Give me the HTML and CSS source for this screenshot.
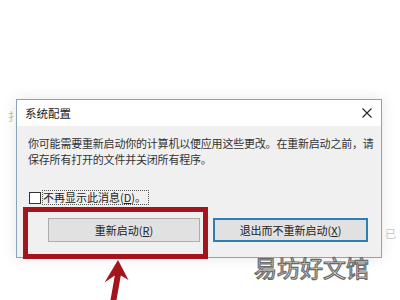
FILE: index.html
```html
<!DOCTYPE html>
<html lang="zh-CN">
<head>
<meta charset="utf-8">
<link rel="stylesheet" href="styles.css">
</head>
<body>
<div class="page">
  <span class="bg-glyph bg-left">扌</span>
  <span class="bg-glyph bg-right">已</span>
  <div class="dialog">
    <div class="titlebar">
      <span class="title">系统配置</span>
      <svg class="close" width="10" height="10" viewBox="0 0 10 10"><path d="M0.5 0.5L9.5 9.5M9.5 0.5L0.5 9.5" stroke="#222" stroke-width="1.1" fill="none"/></svg>
    </div>
    <div class="content">
      <p class="msg">你可能需要重新启动你的计算机以便应用这些更改。在重新启动之前，请<br>保存所有打开的文件并关闭所有程序。</p>
      <label class="check-row">
        <span class="box"></span>
        <span class="check-label">不再显示此消息(<u>D</u>)。</span>
      </label>
      <div class="buttons">
        <button class="btn">重新启动(<u>R</u>)</button>
        <button class="btn btn-default">退出而不重新启动(<u>X</u>)</button>
      </div>
    </div>
  </div>
  <div class="highlight"></div>
  <svg class="arrow" width="50" height="45" viewBox="0 0 50 45">
    <polygon points="23,5 33.5,25 25.8,20.5 21.5,45 15.5,45 19.8,20.5 9.5,27.5" fill="#a3151d"/>
  </svg>
  <div class="watermark">易坊好文馆</div>
</div>
</body>
</html>
```

FILE: styles.css
```css
html, body {
  margin: 0;
  padding: 0;
  background: #ffffff;
}
body {
  width: 400px;
  height: 300px;
  overflow: hidden;
  font-family: "Noto Sans CJK SC", "Noto Sans", sans-serif;
}
.page {
  position: relative;
  width: 400px;
  height: 300px;
  padding: 99px 0 0 16px;
  box-sizing: border-box;
}
.bg-glyph {
  position: absolute;
  font-size: 11px;
  color: #b9c2b4;
}
.bg-left { left: 8px; top: 108px; }
.bg-right { left: 385px; top: 225px; color: #c8c8c8; }
.dialog {
  position: relative;
  width: 366px;
  height: 159px;
  box-sizing: border-box;
  border: 1px solid #8aa3b8;
  background: #f0f0f0;
  box-shadow: 0 0 14px rgba(0, 0, 0, 0.10);
}
.titlebar {
  height: 26px;
  background: #ffffff;
  display: flex;
  align-items: center;
  justify-content: space-between;
  padding: 0 9px 0 8px;
}
.title {
  font-size: 11.5px;
  color: #1a1a1a;
  line-height: 14px;
}
.content {
  padding: 9px 0 0 11px;
}
.msg {
  margin: 0;
  font-size: 11px;
  line-height: 16px;
  color: #333333;
  white-space: nowrap;
  letter-spacing: -0.2px;
}
.check-row {
  display: flex;
  align-items: center;
  margin-top: 23px;
  height: 15px;
  margin-left: 1px;
}
.box {
  width: 10px;
  height: 10px;
  border: 1px solid #333333;
  background: #ffffff;
  margin-right: 1px;
}
.check-label {
  font-size: 11px;
  line-height: 13px;
  color: #222222;
  border: 1px dotted #555555;
  padding: 0 2px 0 0;
}
.buttons {
  display: flex;
  gap: 13px;
  margin-top: 13px;
  padding-left: 20px;
}
.btn {
  width: 152px;
  height: 24px;
  font-family: "Noto Sans CJK SC", "Noto Sans", sans-serif;
  font-size: 11px;
  color: #222222;
  background: #e1e1e1;
  border: 1px solid #adadad;
  padding: 0;
}
.btn-default {
  width: 155px;
  border: 2px solid #2d7fb6;
}
.highlight {
  position: absolute;
  left: 23px;
  top: 207px;
  width: 185px;
  height: 52px;
  box-sizing: border-box;
  border: 5px solid #a3151d;
}
.arrow {
  position: absolute;
  left: 95px;
  top: 255px;
}
.watermark {
  position: absolute;
  left: 254px;
  top: 252px;
  font-size: 23px;
  line-height: 30px;
  color: #ffffff;
  -webkit-text-stroke: 1.2px #6a6a6a;
}
```
